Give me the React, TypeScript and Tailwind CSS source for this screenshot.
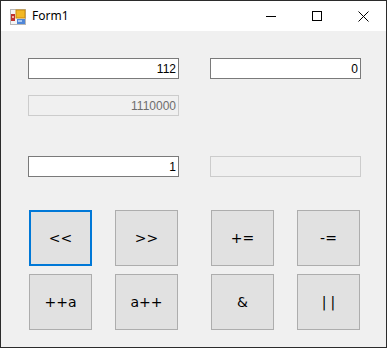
import { useState } from 'react'

function TextBox({ value, disabled }: { value: string; disabled?: boolean }) {
  return (
    <div
      className={
        'w-[151px] h-[21px] border flex items-center justify-end pr-[2px] text-[12px] leading-none ' +
        (disabled ? 'border-[#cccccc] bg-[#f0f0f0] text-[#6d6d6d]' : 'border-[#7a7a7a] bg-white text-black')
      }
    >
      {value}
    </div>
  )
}

function Btn({ label, focused, wide }: { label: string; focused?: boolean; wide?: boolean }) {
  return (
    <button
      className={
        'w-[63px] h-[56px] bg-[#e1e1e1] flex items-center justify-center text-[14px] font-normal text-black ' +
        (wide ? 'tracking-[4px] pl-[4px] ' : '') +
        (focused ? 'border-2 border-[#0078d7]' : 'border border-[#adadad]')
      }
      style={{ fontFamily: '"DejaVu Sans", sans-serif' }}
    >
      {label}
    </button>
  )
}

function FormIcon() {
  return (
    <svg width="16" height="16" viewBox="0 0 16 16">
      <rect x="0.5" y="0.5" width="15" height="15" fill="#f4f4f4" stroke="#b8b8b8" />
      <rect x="1" y="5" width="4" height="7" fill="#c0312b" />
      <rect x="2" y="7" width="2" height="2" fill="#f3b0a0" />
      <rect x="6" y="1" width="9" height="8" fill="#f3b824" stroke="#c98a0c" strokeWidth="1" />
      <rect x="7" y="10" width="8" height="5" fill="#4f86d8" />
      <rect x="8" y="11" width="4" height="2" fill="#a9c8f0" />
    </svg>
  )
}

export default function App() {
  const [a] = useState('112')
  return (
    <div className="w-[387px] h-[348px] border border-[#2b2b2b] bg-[#f0f0f0] flex flex-col overflow-hidden" style={{ fontFamily: '"Liberation Sans", Arial, sans-serif' }}>
      {/* title bar */}
      <div className="h-[30px] bg-white flex items-center shrink-0">
        <div className="ml-[9px] mt-[1px]">
          <FormIcon />
        </div>
        <span className="ml-[6px] text-[12px] text-black" style={{ fontFamily: '"Noto Sans", "Open Sans", sans-serif' }}>
          Form1
        </span>
        <div className="ml-auto flex h-full">
          <div className="w-[46px] h-full flex items-center justify-center">
            <div className="w-[10px] h-px bg-black" />
          </div>
          <div className="w-[46px] h-full flex items-center justify-center">
            <div className="w-[10px] h-[10px] border border-black" />
          </div>
          <div className="w-[46px] h-full flex items-center justify-center">
            <svg width="11" height="11" viewBox="0 0 11 11">
              <path d="M0.5 0.5 L10.5 10.5 M10.5 0.5 L0.5 10.5" stroke="#000" strokeWidth="1" />
            </svg>
          </div>
        </div>
      </div>

      {/* client area */}
      <div className="pl-[27px] pt-[27px] flex flex-col">
        <div className="flex gap-[31px]">
          <TextBox value={a} />
          <TextBox value="0" />
        </div>
        <div className="mt-[16px]">
          <TextBox value="1110000" disabled />
        </div>
        <div className="mt-[40px] flex gap-[31px]">
          <TextBox value="1" />
          <TextBox value="" disabled />
        </div>
        <div className="mt-[33px] ml-[1px] flex flex-col gap-[8px]">
          <div className="flex">
            <Btn label="<<" focused />
            <div className="ml-[23px]"><Btn label=">>" /></div>
            <div className="ml-[33px]"><Btn label="+=" /></div>
            <div className="ml-[23px]"><Btn label="-=" /></div>
          </div>
          <div className="flex">
            <Btn label="++a" />
            <div className="ml-[23px]"><Btn label="a++" /></div>
            <div className="ml-[33px]"><Btn label="&" /></div>
            <div className="ml-[23px]"><Btn label="||" wide /></div>
          </div>
        </div>
      </div>
    </div>
  )
}
